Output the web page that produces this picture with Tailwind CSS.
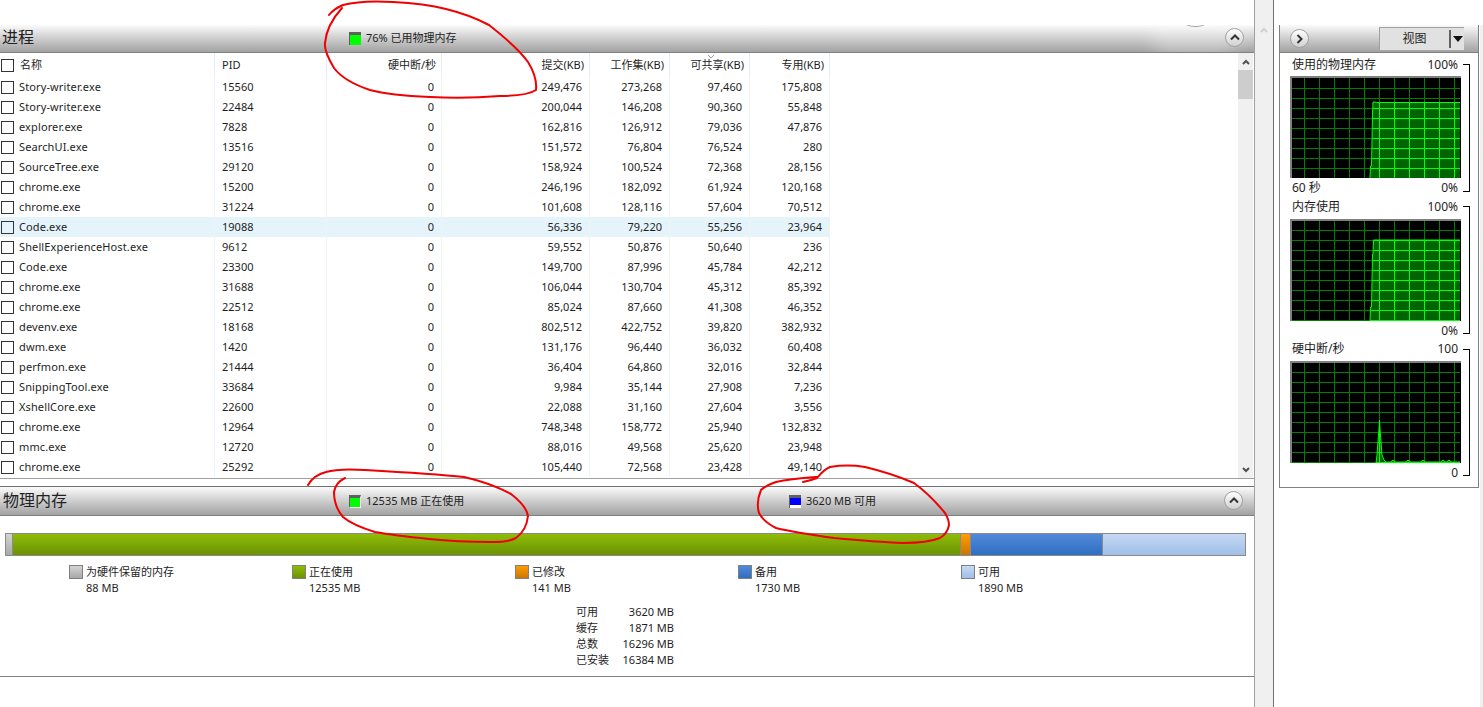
<!DOCTYPE html>
<html lang="en">
<head>
    <meta charset="UTF-8">
    <title>资源监视器</title>
    <script src="https://cdn.jsdelivr.net/npm/@tailwindcss/browser@4"></script>
</head>
<body class="bg-white">
    <div class="relative flex h-[707px] w-[1483px] overflow-hidden bg-white text-[11px] leading-[16px] text-[#1e1e1e] font-['Noto_Sans','Noto_Sans_CJK_SC',sans-serif]">

        <!-- Left column -->
        <div class="w-[1255px] shrink-0 border-r border-[#a0a0a0] pt-[25px]">
            <!-- Process header -->
            <div class="relative flex h-[28px] items-center overflow-hidden border-b border-[#808080] bg-gradient-to-b from-[#fbfbfb] to-[#a2a2a2]">
                <div class="absolute left-[1150px] top-[-16px] h-[50px] w-[90px] rounded-full bg-white/25 blur-[8px]"></div>
                <div class="absolute left-[1183px] top-[-10px] h-[12px] w-[25px] rounded-[50%] border-b border-[#a0a0a0] bg-white"></div>
                <span class="relative top-[-2px] w-[349px] pl-[2px] text-[16px] text-[#222]">进程</span>
                <div class="mr-[5px] h-[13px] w-[12px] border-l border-t-[3px] border-[#606060] bg-[#00ff00]"></div>
                <span class="relative top-[-1px]">76% 已用物理内存</span>
                <button class="absolute left-[1225px] top-[3px] flex h-[19px] w-[19px] items-center justify-center rounded-full border border-[#a0a0a0] bg-gradient-to-b from-white to-[#d0d0d0]">
                    <svg width="10" height="7" viewBox="0 0 10 7"><path d="M1 5.5 L5 1.5 L9 5.5" fill="none" stroke="#333" stroke-width="2"/></svg>
                </button>
            </div>

            <!-- Process table -->
            <div class="flex h-[426px] border-b border-[#a0a0a0]">
                <div class="flex-1">
                    <div class="relative grid h-[24px] w-[830px] grid-cols-[215px_112px_115px_148px_80px_80px_80px]">
                        <div class="flex items-center border-r border-[#e6edf4] pl-[1px]">
                            <span class="h-[13px] w-[13px] border border-[#333]"></span>
                            <span class="ml-[6px]">名称</span>
                        </div>
                        <div class="flex items-center border-r border-[#e6edf4] pl-[7px]">PID</div>
                        <div class="flex items-center justify-end border-r border-[#e6edf4] pr-[5px]">硬中断/秒</div>
                        <div class="flex items-center justify-end border-r border-[#e6edf4] pr-[5px]">提交(KB)</div>
                        <div class="flex items-center justify-end border-r border-[#e6edf4] pr-[5px]">工作集(KB)</div>
                        <div class="relative flex items-center justify-end border-r border-[#e6edf4] pr-[5px]">
                            <svg class="absolute left-[37px] top-[1px]" width="8" height="5" viewBox="0 0 8 5"><path d="M1 1 L4 4 L7 1" fill="none" stroke="#a0a0a0"/></svg>
                            可共享(KB)
                        </div>
                        <div class="flex items-center justify-end border-r border-[#e6edf4] pr-[5px]">专用(KB)</div>
                    </div>
                    <div id="rows"></div>
                </div>
                <!-- Scrollbar -->
                <div class="mr-[1px] flex w-[15px] flex-col items-center bg-[#f0f0f0]">
                    <div class="flex h-[17px] w-full items-center justify-center">
                        <svg width="8" height="6" viewBox="0 0 8 6"><path d="M1 5 L4 2 L7 5" fill="none" stroke="#505050" stroke-width="2"/></svg>
                    </div>
                    <div class="h-[29px] w-full bg-[#cdcdcd]"></div>
                    <div class="flex-1"></div>
                    <div class="flex h-[17px] w-full items-center justify-center">
                        <svg width="8" height="6" viewBox="0 0 8 6"><path d="M1 1 L4 4 L7 1" fill="none" stroke="#505050" stroke-width="2"/></svg>
                    </div>
                </div>
            </div>

            <!-- Memory header -->
            <div class="relative mt-[7px] flex h-[30px] items-center border-y border-t-[#707070] border-b-[#808080] bg-gradient-to-b from-[#fbfbfb] to-[#a2a2a2]">
                <span class="relative top-[-1px] w-[349px] pl-[3px] text-[16px] text-[#222]">物理内存</span>
                <div class="mr-[5px] h-[13px] w-[12px] border-b border-l border-r border-t-[3px] border-b-white border-l-[#606060] border-r-white border-t-[#606060] bg-[#00ff00]"></div>
                <span class="w-[423px]">12535 MB 正在使用</span>
                <div class="mr-[5px] flex h-[13px] w-[12px] flex-col border-l border-t-[3px] border-[#606060] bg-white">
                    <div class="h-[7px] bg-[#0000ff]"></div>
                </div>
                <span>3620 MB 可用</span>
                <button class="absolute left-[1224px] top-[4px] flex h-[19px] w-[19px] items-center justify-center rounded-full border border-[#a0a0a0] bg-gradient-to-b from-white to-[#d0d0d0]">
                    <svg width="10" height="7" viewBox="0 0 10 7"><path d="M1 5.5 L5 1.5 L9 5.5" fill="none" stroke="#333" stroke-width="2"/></svg>
                </button>
            </div>

            <!-- Memory panel -->
            <div class="h-[161px] border-b border-[#808080] pt-[17px]">
                <div class="ml-[5px] flex h-[23px] w-[1241px] border border-[#8a8a8a]">
                    <div class="w-[7px] border-r border-[#8a8a8a] bg-gradient-to-b from-[#d4d4d4] to-[#a8a8a8]"></div>
                    <div class="w-[947px] bg-gradient-to-b from-[#8fbc08] to-[#6c9204]"></div>
                    <div class="w-[11px] border-x border-[#8a8a8a] bg-gradient-to-b from-[#ff9c00] to-[#cc7600]"></div>
                    <div class="w-[131px] bg-gradient-to-b from-[#5289d8] to-[#2f6ec2]"></div>
                    <div class="flex-1 border-l border-[#8a8a8a] bg-gradient-to-b from-[#c6d9f3] to-[#9fbee8]"></div>
                </div>
                <div class="ml-[69px] mt-[8px] flex">
                    <div class="w-[223px]">
                        <div class="flex items-center"><span class="mr-[3px] h-[14px] w-[14px] border border-[#808080] bg-gradient-to-b from-[#d4d4d4] to-[#a8a8a8]"></span>为硬件保留的内存</div>
                        <div class="pl-[17px]">88 MB</div>
                    </div>
                    <div class="w-[223px]">
                        <div class="flex items-center"><span class="mr-[3px] h-[14px] w-[14px] border border-[#808080] bg-gradient-to-b from-[#8fbc08] to-[#6c9204]"></span>正在使用</div>
                        <div class="pl-[17px]">12535 MB</div>
                    </div>
                    <div class="w-[223px]">
                        <div class="flex items-center"><span class="mr-[3px] h-[14px] w-[14px] border border-[#808080] bg-gradient-to-b from-[#ff9c00] to-[#cc7600]"></span>已修改</div>
                        <div class="pl-[17px]">141 MB</div>
                    </div>
                    <div class="w-[223px]">
                        <div class="flex items-center"><span class="mr-[3px] h-[14px] w-[14px] border border-[#808080] bg-gradient-to-b from-[#5289d8] to-[#2f6ec2]"></span>备用</div>
                        <div class="pl-[17px]">1730 MB</div>
                    </div>
                    <div class="w-[223px]">
                        <div class="flex items-center"><span class="mr-[3px] h-[14px] w-[14px] border border-[#808080] bg-gradient-to-b from-[#c6d9f3] to-[#9fbee8]"></span>可用</div>
                        <div class="pl-[17px]">1890 MB</div>
                    </div>
                </div>
                <div class="ml-[576px] mt-[8px] w-[98px]">
                    <div class="flex h-[16px] justify-between"><span>可用</span><span>3620 MB</span></div>
                    <div class="flex h-[16px] justify-between"><span>缓存</span><span>1871 MB</span></div>
                    <div class="flex h-[16px] justify-between"><span>总数</span><span>16296 MB</span></div>
                    <div class="flex h-[16px] justify-between"><span>已安装</span><span>16384 MB</span></div>
                </div>
            </div>
        </div>

        <!-- Splitter -->
        <div class="flex w-[19px] shrink-0 justify-center border-r border-[#707070] bg-[#f0f0f0] pt-[27px]">
            <svg width="8" height="6" viewBox="0 0 8 6"><path d="M1 5 L4 2 L7 5" fill="none" stroke="#d0d0d0" stroke-width="2"/></svg>
        </div>

        <!-- Right column -->
        <div class="ml-[5px] w-[200px] shrink-0 pt-[25px] text-[12px]">
            <div class="h-[463px] border-x border-b border-[#808080]">
                <div class="relative flex h-[28px] items-center border-b border-[#808080] bg-gradient-to-b from-[#fbfbfb] to-[#a2a2a2]">
                    <button class="ml-[10px] flex h-[19px] w-[19px] items-center justify-center rounded-full border border-[#a0a0a0] bg-gradient-to-b from-white to-[#d0d0d0]">
                        <svg width="7" height="10" viewBox="0 0 7 10"><path d="M1.5 1 L5.5 5 L1.5 9" fill="none" stroke="#333" stroke-width="2"/></svg>
                    </button>
                    <div class="absolute left-[99px] top-[2px] flex h-[23px] w-[85px] items-center border-l border-t border-[#a0a0a0] bg-[#e1e1e1]">
                        <span class="w-[69px] text-center">视图</span>
                        <span class="h-[18px] w-[2px] bg-[#606060]"></span>
                        <svg class="ml-[2px]" width="10" height="6" viewBox="0 0 10 6"><path d="M0 0 H10 L5 6 Z" fill="#111"/></svg>
                    </div>
                </div>

                <div class="pl-[10px]">
                    <!-- Physical memory graph -->
                    <div class="box-content flex h-[142px] pt-[3px]">
                        <div class="w-[171px]">
                            <div class="flex h-[20px] justify-between pl-[2px] pr-[3px] pt-[1px]"><span>使用的物理内存</span><span>100%</span></div>
                            <div class="h-[102px] border-l-2 border-t-2 border-[#808080]" data-graph="a"></div>
                            <div class="flex h-[20px] items-center justify-between pl-[2px] pr-[3px]"><span>60 秒</span><span>0%</span></div>
                        </div>
                        <div class="mb-[6px] ml-[2px] mt-[8px] w-[7px] border-y border-r border-black"></div>
                    </div>
                    <!-- Memory usage graph -->
                    <div class="flex h-[142px]">
                        <div class="w-[171px]">
                            <div class="flex h-[21px] justify-between pl-[2px] pr-[3px] pt-[1px]"><span>内存使用</span><span>100%</span></div>
                            <div class="h-[102px] border-l-2 border-t-2 border-[#808080]" data-graph="b"></div>
                            <div class="flex h-[19px] items-center justify-end pr-[3px]"><span>0%</span></div>
                        </div>
                        <div class="mb-[6px] ml-[2px] mt-[8px] w-[7px] border-y border-r border-black"></div>
                    </div>
                    <!-- Hard faults graph -->
                    <div class="flex h-[143px]">
                        <div class="w-[171px]">
                            <div class="flex h-[21px] justify-between pl-[2px] pr-[3px] pt-[1px]"><span>硬中断/秒</span><span>100</span></div>
                            <div class="h-[102px] border-l-2 border-t-2 border-[#808080]" data-graph="c"></div>
                            <div class="flex h-[20px] items-center justify-end pr-[3px]"><span>0</span></div>
                        </div>
                        <div class="mb-[7px] ml-[2px] mt-[9px] w-[7px] border-y border-r border-black"></div>
                    </div>
                </div>
            </div>
        </div>

        <!-- Far right edge -->
        <div class="ml-[1px] mt-[25px] flex-1 bg-[#f0f0f0]"></div>

        <!-- Red pen marks drawn over the screenshot -->
        <svg class="pointer-events-none absolute left-0 top-0" width="1483" height="707" fill="none" stroke="#f00000" stroke-width="2" stroke-linecap="round">
            <path d="M329 15 C333 10 338 7 343 5 C358 1 378 1 393 2 C412 3 430 5 446 9 C462 13 476 18 489 25 C503 36 518 48 528 62 C533 70 537 80 536 90 C530 94 515 96 500 96 C475 98 450 98 430 97 C405 96 385 94 370 90 C352 84 340 76 334 68 C328 58 324 50 325 43 C326 32 331 20 342 8"/>
            <path d="M308 485 C312 478 318 474 326 472 C336 469 350 469 365 470 C400 472 435 474 464 477 C482 481 498 487 511 494 C520 501 527 509 528 516 C527 525 523 533 516 538 C508 542 500 542 490 542 C470 542 448 541 429 539 C410 537 392 535 375 532 C362 528 350 523 343 517 C337 510 334 500 334 492 C335 486 339 481 345 478"/>
            <path d="M803 482 C808 481 812 480 817 478 C821 473 825 469 830 467 C842 465 853 465 865 467 C882 471 900 477 914 483 C925 491 936 502 945 513 C948 518 949 521 949 525 C948 531 945 535 940 538 C930 542 917 543 903 543 C880 542 856 540 834 538 C812 535 792 532 776 528 C768 524 762 519 759 513 C757 506 758 497 761 490 C765 486 770 484 776 482 C790 479 804 478 817 477"/>
        </svg>
    </div>

    <script>
        const processes = [
            ['Story-writer.exe', '15560', '249,476', '273,268', '97,460', '175,808'],
            ['Story-writer.exe', '22484', '200,044', '146,208', '90,360', '55,848'],
            ['explorer.exe', '7828', '162,816', '126,912', '79,036', '47,876'],
            ['SearchUI.exe', '13516', '151,572', '76,804', '76,524', '280'],
            ['SourceTree.exe', '29120', '158,924', '100,524', '72,368', '28,156'],
            ['chrome.exe', '15200', '246,196', '182,092', '61,924', '120,168'],
            ['chrome.exe', '31224', '101,608', '128,116', '57,604', '70,512'],
            ['Code.exe', '19088', '56,336', '79,220', '55,256', '23,964'],
            ['ShellExperienceHost.exe', '9612', '59,552', '50,876', '50,640', '236'],
            ['Code.exe', '23300', '149,700', '87,996', '45,784', '42,212'],
            ['chrome.exe', '31688', '106,044', '130,704', '45,312', '85,392'],
            ['chrome.exe', '22512', '85,024', '87,660', '41,308', '46,352'],
            ['devenv.exe', '18168', '802,512', '422,752', '39,820', '382,932'],
            ['dwm.exe', '1420', '131,176', '96,440', '36,032', '60,408'],
            ['perfmon.exe', '21444', '36,404', '64,860', '32,016', '32,844'],
            ['SnippingTool.exe', '33684', '9,984', '35,144', '27,908', '7,236'],
            ['XshellCore.exe', '22600', '22,088', '31,160', '27,604', '3,556'],
            ['chrome.exe', '12964', '748,348', '158,772', '25,940', '132,832'],
            ['mmc.exe', '12720', '88,016', '49,568', '25,620', '23,948'],
            ['chrome.exe', '25292', '105,440', '72,568', '23,428', '49,140']
        ];

        document.getElementById('rows').innerHTML = processes.map((p, i) => `
            <div class="grid h-[20px] w-[830px] grid-cols-[215px_112px_115px_148px_80px_80px_80px] ${i === 7 ? 'bg-[#e5f3fb]' : ''}">
                <div class="flex items-center border-r border-[#eef3f8] pl-[1px]">
                    <span class="h-[13px] w-[13px] border border-[#333]"></span>
                    <span class="ml-[5px] tracking-[0.12px]">${p[0]}</span>
                </div>
                <div class="flex items-center border-r border-[#eef3f8] pl-[7px]">${p[1]}</div>
                <div class="flex items-center justify-end border-r border-[#eef3f8] pr-[7px]">0</div>
                <div class="flex items-center justify-end border-r border-[#eef3f8] pr-[7px]">${p[2]}</div>
                <div class="flex items-center justify-end border-r border-[#eef3f8] pr-[7px]">${p[3]}</div>
                <div class="flex items-center justify-end border-r border-[#eef3f8] pr-[7px]">${p[4]}</div>
                <div class="flex items-center justify-end border-r border-[#eef3f8] pr-[7px]">${p[5]}</div>
            </div>`).join('');

        // graph outlines, in pixels from the graph's top left corner
        const graphs = {
            a: { gridY: 10, line: [[78, 100], [78.5, 88], [79.5, 88], [80, 62], [80.5, 36], [81, 24], [82, 24], [86, 24.5], [168, 24.5]] },
            b: { gridY: 9, line: [[78, 100], [78.5, 86], [79.5, 86], [80, 60], [80.5, 33], [81, 33], [81.5, 19], [168, 19]] },
            c: { gridY: 9, line: [[84, 100], [85, 92], [86, 78], [87, 66], [87.5, 57], [88, 66], [89, 78], [90, 92], [92, 97], [94, 99], [99, 99], [100, 97.5], [102, 97.5], [103, 99], [114, 99], [115, 97.5], [117, 97.5], [118, 99], [129, 99], [130, 97.5], [132, 97.5], [133, 99], [149, 99], [150, 97.5], [152, 97.5], [153, 99], [155, 99], [156, 97.5], [158, 97.5], [159, 99], [168, 99]] }
        };

        function gridLines(offsetY, color) {
            let out = '';
            for (let x = 12; x < 168; x += 15) out += `<path d="M${x + 0.5} 0 V100" stroke="${color}"/>`;
            for (let y = offsetY; y < 100; y += 10) out += `<path d="M0 ${y + 0.5} H168" stroke="${color}"/>`;
            return out;
        }

        document.querySelectorAll('[data-graph]').forEach(el => {
            const key = el.dataset.graph;
            const g = graphs[key];
            const pts = g.line.map(p => p.join(',')).join(' ');
            const area = `${pts} 168,100 ${g.line[0][0]},100`;
            el.innerHTML = `
                <svg class="block" width="169" height="100" viewBox="0 0 169 100">
                    <rect width="169" height="100" fill="#000"/>
                    ${gridLines(g.gridY, '#008000')}
                    <polygon points="${area}" fill="#006400"/>
                    <clipPath id="clip-${key}"><polygon points="${area}"/></clipPath>
                    <g clip-path="url(#clip-${key})">${gridLines(g.gridY, '#00ff00')}</g>
                    <polyline points="${pts}" fill="none" stroke="#00ff00"/>
                </svg>`;
        });
    </script>
</body>
</html>
